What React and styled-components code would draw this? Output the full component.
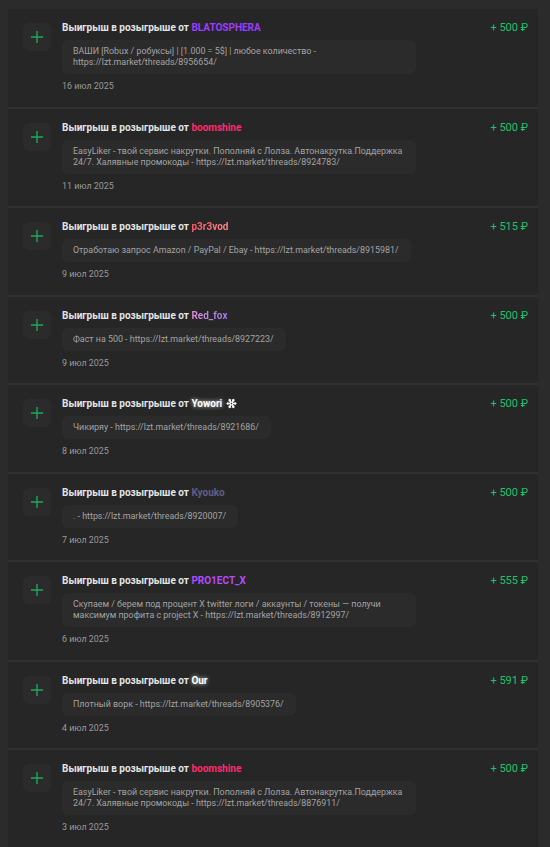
import React from "react";
import styled, { createGlobalStyle, css } from "styled-components";
import { Snowflake } from "lucide-react";

const GlobalStyle = createGlobalStyle`
  body {
    margin: 0;
    background: #2b2b2b;
    font-family: Roboto, "Liberation Sans", sans-serif;
  }
`;

const items = [
  {
    name: "BLATOSPHERA",
    kind: "blato",
    amount: 500,
    text: "ВАШИ [Robux / робуксы] | [1.000 = 5$] | любое количество - https://lzt.market/threads/8956654/",
    date: "16 июл 2025",
  },
  {
    name: "boomshine",
    kind: "boom",
    amount: 500,
    text: "EasyLiker - твой сервис накрутки. Пополняй с Лолза. Автонакрутка.Поддержка 24/7. Халявные промокоды - https://lzt.market/threads/8924783/",
    date: "11 июл 2025",
  },
  {
    name: "p3r3vod",
    kind: "perevod",
    amount: 515,
    text: "Отработаю запрос Amazon / PayPal / Ebay - https://lzt.market/threads/8915981/",
    date: "9 июл 2025",
  },
  {
    name: "Red_fox",
    kind: "fox",
    amount: 500,
    text: "Фаст на 500 - https://lzt.market/threads/8927223/",
    date: "9 июл 2025",
  },
  {
    name: "Yowori",
    kind: "glow",
    snow: true,
    amount: 500,
    text: "Чикиряу - https://lzt.market/threads/8921686/",
    date: "8 июл 2025",
  },
  {
    name: "Kyouko",
    kind: "kyouko",
    amount: 500,
    text: ". - https://lzt.market/threads/8920007/",
    date: "7 июл 2025",
  },
  {
    name: "PRO1ECT_X",
    kind: "project",
    amount: 555,
    text: "Скупаем / берем под процент X twitter логи / аккаунты / токены — получи максимум профита с project X - https://lzt.market/threads/8912997/",
    date: "6 июл 2025",
  },
  {
    name: "Our",
    kind: "glow",
    amount: 591,
    text: "Плотный ворк - https://lzt.market/threads/8905376/",
    date: "4 июл 2025",
  },
  {
    name: "boomshine",
    kind: "boom",
    amount: 500,
    text: "EasyLiker - твой сервис накрутки. Пополняй с Лолза. Автонакрутка.Поддержка 24/7. Халявные промокоды - https://lzt.market/threads/8876911/",
    date: "3 июл 2025",
  },
];

const nameStyles = {
  blato: css`color: #9d3cff;`,
  boom: css`color: #ff2a6d;`,
  perevod: css`
    background: linear-gradient(90deg, #ff5c6c, #ff8a8a);
    -webkit-background-clip: text;
    color: transparent;
  `,
  fox: css`
    background: linear-gradient(90deg, #e08ad8, #9a7ce8);
    -webkit-background-clip: text;
    color: transparent;
  `,
  glow: css`
    color: #ffffff;
    text-shadow: 0 0 4px rgba(255, 255, 255, 0.8);
  `,
  kyouko: css`color: #5f5f88;`,
  project: css`color: #b24cff;`,
};

const List = styled.div`
  margin: 9px 12px 0 8px;
  display: flex;
  flex-direction: column;
  gap: 2px;
  background: #313131;
`;

const Row = styled.div`
  display: flex;
  align-items: flex-start;
  background: #262626;
  padding: 12px 10px 14.5px 15px;
`;

const IconBox = styled.div`
  width: 28px;
  height: 28px;
  margin-top: 2px;
  margin-right: 11px;
  flex-shrink: 0;
  border-radius: 6px;
  background: #2b2b2b;
  display: flex;
  align-items: center;
  justify-content: center;
`;

const Body = styled.div`
  flex: 1;
  min-width: 0;
  display: flex;
  flex-direction: column;
  align-items: flex-start;
`;

const Title = styled.div`
  font-size: 10px;
  line-height: 13px;
  font-weight: 700;
  color: #e4e4e4;
  display: flex;
  align-items: center;
  gap: 4px;
`;

const Name = styled.span`
  ${(p) => nameStyles[p.$kind]}
`;

const Desc = styled.div`
  margin-top: 6px;
  max-width: 331px;
  padding: 6px 12px 6px 11px;
  background: #2b2b2b;
  border-radius: 6px;
  font-size: 8.9px;
  line-height: 11px;
  color: #a3a3a3;
`;

const Date = styled.div`
  margin-top: 6px;
  font-size: 8.9px;
  line-height: 12px;
  color: #9a9a9a;
`;

const Amount = styled.div`
  flex-shrink: 0;
  font-size: 11px;
  line-height: 13px;
  color: #1ec26a;
`;

const Plus = () => (
  <svg width="12" height="12" viewBox="0 0 12 12">
    <path d="M6 0v12M0 6h12" stroke="#1fa85c" strokeWidth="1.4" />
  </svg>
);

export default function App() {
  return (
    <>
      <GlobalStyle />
      <List>
        {items.map((it, i) => (
          <Row key={i}>
            <IconBox>
              <Plus />
            </IconBox>
            <Body>
              <Title>
                <span>
                  Выигрыш в розыгрыше от <Name $kind={it.kind}>{it.name}</Name>
                </span>
                {it.snow && <Snowflake size={11} color="#fff" strokeWidth={2.6} />}
              </Title>
              <Desc>{it.text}</Desc>
              <Date>{it.date}</Date>
            </Body>
            <Amount>+ {it.amount} ₽</Amount>
          </Row>
        ))}
      </List>
    </>
  );
}
